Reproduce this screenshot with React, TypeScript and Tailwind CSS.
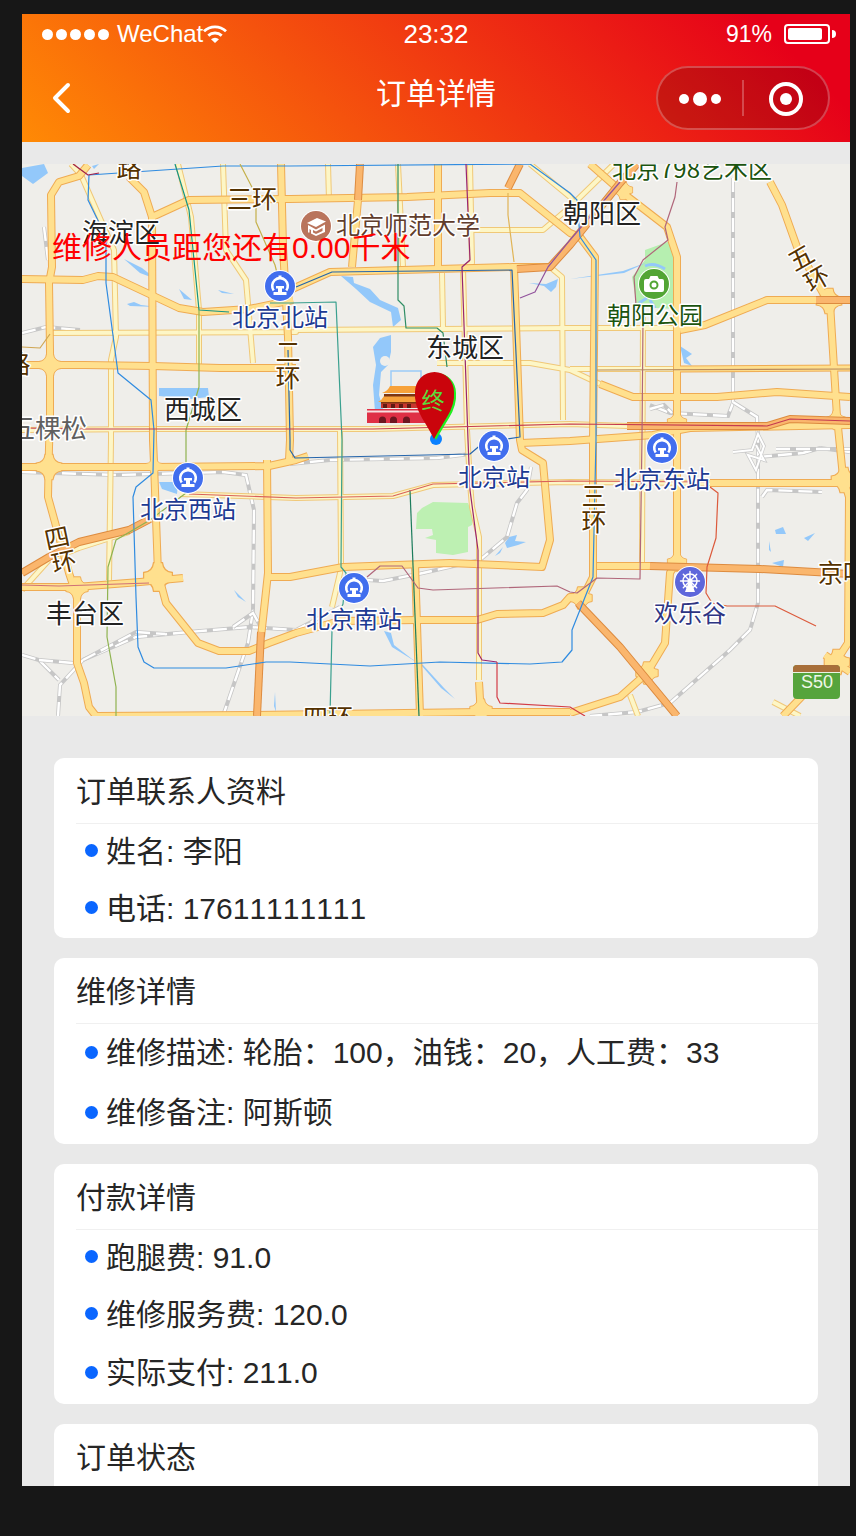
import type { ReactNode } from 'react'
import clsx from 'clsx'

type Row = { label: string; value: string; tall?: boolean }
type Section = { title: string; rows: Row[] }

const sections: Section[] = [
  {
    title: '订单联系人资料',
    rows: [
      { label: '姓名', value: '李阳' },
      { label: '电话', value: '17611111111' },
    ],
  },
  {
    title: '维修详情',
    rows: [
      { label: '维修描述', value: '轮胎：100，油钱：20，人工费：33', tall: true },
      { label: '维修备注', value: '阿斯顿', tall: true },
    ],
  },
  {
    title: '付款详情',
    rows: [
      { label: '跑腿费', value: '91.0' },
      { label: '维修服务费', value: '120.0' },
      { label: '实际支付', value: '211.0', tall: true },
    ],
  },
  {
    title: '订单状态',
    rows: [],
  },
]

// Road network, drawn back to front
const minorRoads = [
  '71,164 81,175 114,250 116,337 111,360 111,440 109,580',
  '223,164 226,250 246,280 253,363',
  '178,164 191,217 199,310 199,367',
  '49,333 296,332 296,330 570,328 680,328',
  '328,164 329,200',
  '398,164 403,267',
  '470,164 472,263 463,268 467,430 470,483 472,507 479,537 479,680',
  '470,230 543,230 570,207 614,164',
  '530,164 570,197 582,215',
  '550,267 562,277 563,420',
  '437,363 530,363 570,370 600,384',
  '643,317 642,563',
  '340,430 341,563 340,573 332,607',
  '180,494 296,498 393,496 433,485 570,482 710,483',
  '442,273 443,327',
  '22,430 153,429 373,429 570,424 627,426',
  '22,590 49,560 79,548 129,532',
  '570,369 680,369',
  '630,695 638,716',
  '773,702 800,716',
]

const majorRoads = [
  '88,165 79,176 59,182 51,195 52,267 49,283 50,350 50,417 49,447 48,497 69,573 77,597 77,663 84,683 89,707 96,716',
  '129,177 144,192 152,217 153,440 154,463 158,573 166,603 198,643 219,651 249,651 269,643 296,633 340,621 417,620 477,620 497,614 543,613 563,605 570,597 583,597 593,577 593,440 595,257 580,237 570,233 520,193 490,193 407,197 290,199 189,200 152,217',
  '22,279 83,280 98,276 113,277 179,308 203,312 249,309 293,300',
  '290,290 330,272 513,267 550,267',
  '22,365 85,365 153,366 220,368 296,368',
  '281,164 283,247 288,337 290,440 289,460',
  '438,164 438,270',
  '514,267 520,440 522,450 543,463 550,540 542,567 450,563 343,567 290,577 266,577',
  '267,460 268,573 261,637',
  '22,467 154,467 269,466 296,460 308,456',
  '22,587 76,587 140,582 183,578',
  '590,164 623,193 667,227 677,257 677,440 677,560 670,573 665,643 647,673 620,697 570,713',
  '770,182 782,205 797,247 823,293 830,303 837,417 843,477 849,497 848,643 837,660 783,716',
  '680,330 705,325 767,300 850,300',
  '600,384 633,397 717,397 777,392 850,397',
  '710,483 837,483',
  '597,566 650,566',
  '415,563 420,716',
  '479,682 481,716',
  '96,716 250,715 481,712 570,712',
  '520,443 570,441 653,435 690,428 850,425',
  '358,200 352,267',
  '825,655 850,672',
]

const sideRoads = [
  '680,369 850,368',
]

const highways = [
  '360,164 358,200',
  '520,164 508,188',
  '517,269 550,267 570,245 620,183 637,164',
  '22,573 49,557 79,542 129,530 150,519',
  '261,632 257,716',
  '627,426 767,426 790,419 850,421',
  '650,566 760,569 850,574',
  '578,603 620,647 677,716',
  '816,300 850,300',
]

const junctions = [
  [50, 365, 7], [49, 467, 8], [154, 466, 5], [158, 577, 9], [77, 588, 7],
  [677, 422, 6], [677, 562, 6], [647, 673, 7], [581, 598, 7],
  [829, 301, 8], [836, 420, 6], [844, 480, 8], [837, 662, 8],
  [623, 190, 6], [481, 710, 7],
]

const railways = [
  '733,178 733,403 728,416 670,413 650,405',
  '650,409 664,405 672,413',
  '733,402 757,417 758,440 758,603 750,630 730,650 670,703 637,712 590,716',
  '758,457 803,453 820,448 850,452',
  '776,449 850,449',
  '762,497 767,490 822,492',
  '22,472 116,475 223,472 246,475 254,510 253,610 248,643 223,716',
  '58,716 60,685 83,660 136,637 189,632 249,627 296,630 340,607',
  '22,655 39,660 59,680',
  '39,660 73,663',
  '83,660 136,632 165,634',
  '233,627 253,613 262,629',
  '290,464 330,460 437,458 470,454',
  '531,467 527,490 517,503 507,537 480,560 423,573 383,581 367,580',
  '44,227 48,260',
  '22,333 46,327 80,330',
]

const metroLines: [string, string][] = [
  ['#2f8be0', '89,175 223,166 290,166 530,164 570,193 577,200 580,237 596,260 596,440 593,577 572,630 572,650 562,662 530,664 440,662 370,666 290,662 266,662 226,668 154,668 144,662 138,647 136,597 133,497 136,487 153,473 154,430 151,400 118,373 106,283 106,237 88,200 89,175'],
  ['#2565ac', '288,350 290,440 290,450 295,458 470,454 483,443 520,437 512,270 332,272 296,287'],
  ['#149384', '175,164 189,210 199,310 229,312'],
  ['#3aa08f', '270,303 290,303 336,302 342,440 341,567 346,573 343,604 332,630 330,716'],
  ['#8fb350', '199,310 199,387 186,430 186,493 150,520 116,540 108,567 107,637 116,687 116,716'],
  ['#2f8d64', '398,164 398,300 404,306 406,328 437,328 443,333 447,367'],
  ['#1c7c5c', '410,490 419,716'],
  ['#99246f', '466,164 470,260 462,267 468,440 470,490 478,550 478,653 482,660 497,662'],
  ['#d23c46', '497,662 497,697 500,703 570,707 585,716'],
  ['#c43a50', '22,428 83,429 373,429 570,424 767,426 790,419 850,421'],
  ['#b0667a', '677,182 675,197 665,227 668,240 643,260 634,277 636,305 643,320 642,437 640,579 597,578 577,593 570,592 557,586 433,590 418,588 402,566 380,566 367,577'],
  ['#dc5a3c', '710,487 718,493 716,538 707,567 706,593 712,603 727,606 775,606 816,626'],
  ['#d9605a', '189,494 296,498 393,496 433,484 570,481 710,482'],
  ['#cf7077', '22,585 59,586 149,583'],
  ['#b98a5c', '597,370 850,369'],
  ['#91529c', '620,182 570,240 548,267 535,292 520,298'],
  ['#a02049', '73,164 88,175 99,173'],
  ['#c4b04a', '240,164 256,195 256,222 275,265 280,285'],
  ['#cfa653', '22,347 40,348 50,334'],
  ['#e0b456', '508,193 508,215 514,262'],
]

const water = [
  '22,168 44,164 48,173 33,184 22,176',
  '92,166 99,164 94,169',
  '159,388 208,388 209,397 190,399 159,396',
  '124,259 142,268 156,279 140,273',
  '127,304 134,302 141,305 158,307 130,306',
  '179,289 192,300 184,299',
  '218,290 234,294 222,293',
  '341,276 353,277 354,283 370,289 380,300 398,308 401,320 393,327 391,312 370,302 356,289',
  '373,347 380,338 391,335 391,352 388,365 381,372 379,395 384,412 375,412 373,385 376,365',
  '159,482 178,482 177,494 162,489',
  '384,631 391,633 394,645 412,659 423,665 444,688 455,699 441,688 421,665 392,647',
  '680,346 692,354 686,358 692,366 684,363',
  '529,283 546,284 558,279 556,287 551,292 544,286',
  '509,537 517,535 515,541 526,542 518,545 507,548 505,543',
  '495,556 503,547 500,553',
  '570,279 623,271 648,262 624,273',
  '775,530 783,527 786,534 776,534',
  '804,538 815,533 808,541',
  '772,563 784,560 783,567',
  '769,541 771,552 769,550',
  '234,590 246,602 238,597',
  '275,692 276,712 274,706',
]

type Label = {
  text: string
  x: number
  y: number
  tone: 'district' | 'road' | 'station' | 'park' | 'school' | 'fun' | 'faded'
  turn?: number
}

const labels: Label[] = [
  { text: '海淀区', x: 121, y: 242, tone: 'district' },
  { text: '朝阳区', x: 602, y: 223, tone: 'district' },
  { text: '东城区', x: 465, y: 357, tone: 'district' },
  { text: '西城区', x: 203, y: 419, tone: 'district' },
  { text: '丰台区', x: 85, y: 623, tone: 'district' },
  { text: '五棵松', x: 48, y: 438, tone: 'faded' },
  { text: '路', x: 129, y: 177, tone: 'road' },
  { text: '三环', x: 252, y: 208, tone: 'road' },
  { text: '路', x: 18, y: 373, tone: 'road' },
  { text: '二', x: 288, y: 361, tone: 'road' },
  { text: '环', x: 288, y: 387, tone: 'road' },
  { text: '三', x: 594, y: 505, tone: 'road' },
  { text: '环', x: 594, y: 531, tone: 'road' },
  { text: '五', x: 801, y: 267, tone: 'road', turn: -30 },
  { text: '环', x: 817, y: 288, tone: 'road', turn: -30 },
  { text: '四', x: 57, y: 547, tone: 'road', turn: -12 },
  { text: '环', x: 64, y: 571, tone: 'road', turn: -12 },
  { text: '四环', x: 328, y: 727, tone: 'road' },
  { text: '京哈', x: 843, y: 582, tone: 'road' },
  { text: '北京798艺术区', x: 692, y: 178, tone: 'park' },
  { text: '朝阳公园', x: 655, y: 324, tone: 'park' },
  { text: '北京师范大学', x: 408, y: 234, tone: 'school' },
  { text: '北京北站', x: 280, y: 326, tone: 'station' },
  { text: '北京站', x: 494, y: 486, tone: 'station' },
  { text: '北京东站', x: 662, y: 488, tone: 'station' },
  { text: '北京西站', x: 188, y: 518, tone: 'station' },
  { text: '北京南站', x: 354, y: 628, tone: 'station' },
  { text: '欢乐谷', x: 690, y: 622, tone: 'fun' },
]

const toneClass: Record<Label['tone'], string> = {
  district: 'fill-[#222222] text-[26px]',
  faded: 'fill-[#5f5f5f] text-[26px]',
  road: 'fill-[#553200] text-[25px]',
  station: 'fill-[#1d3b93] text-[24px]',
  park: 'fill-[#1b540f] text-[24px]',
  school: 'fill-[#603d2d] text-[24px]',
  fun: 'fill-[#2e3583] text-[24px]',
}

const stations = [
  [280, 286],
  [494, 446],
  [662, 448],
  [188, 478],
  [354, 588],
]

function Road({ points, width, color }: { points: string; width: number; color: string }) {
  return <polyline points={points} fill="none" stroke={color} strokeWidth={width} strokeLinejoin="round" />
}

function Poi({ x, y, color, children }: { x: number; y: number; color: string; children: ReactNode }) {
  return (
    <g transform={`translate(${x} ${y})`}>
      <circle r="16" fill="#fff" />
      <circle r="15" fill={color} />
      {children}
    </g>
  )
}

function CityMap() {
  return (
    <svg viewBox="22 164 828 552" className="block w-full font-['Noto_Sans_CJK_SC',sans-serif]" role="img" aria-label="地图">
      <rect x="22" y="164" width="828" height="552" fill="#efeeea" />

      <path d="M422 508 433 502 468 503 473 517 472 525 468 527 468 552 453 555 436 553 436 540 425 538 433 535 432 529 416 529 417 513Z" fill="#bdf0b2" />
      <path d="M645 250 670 241 675 250 675 309 637 307 632 277 645 260Z" fill="#b6efb0" />
      {water.map((p) => <polygon key={p} points={p} fill="#93c8fa" />)}
      <path d="M391 391V371H421V390" fill="none" stroke="#9ccbf8" strokeWidth="1.5" />
      <ellipse cx="385" cy="361" rx="5" ry="5" fill="#efeeea" />
      <path d="M645 266q9-4 20 3M650 300l5 8M639 303l8-5" fill="none" stroke="#93c8fa" strokeWidth="3" />

      {railways.map((p) => (
        <g key={p} fill="none">
          <polyline points={p} stroke="#c6c6c6" strokeWidth="4" />
          <polyline points={p} stroke="#ffffff" strokeWidth="2.4" strokeDasharray="14 6" />
        </g>
      ))}
      <path d="M733 452 752 450 758 434 764 446 756 470 748 455 764 460 756 445" fill="none" stroke="#c9c9c9" strokeWidth="3.5" />
      <path d="M733 452 752 450 758 434 764 446 756 470 748 455 764 460 756 445" fill="none" stroke="#fff" strokeWidth="2" />

      {minorRoads.map((p) => <Road key={p} points={p} width={6} color="#f0c878" />)}
      {minorRoads.map((p) => <Road key={p} points={p} width={4} color="#fdf6c6" />)}
      {sideRoads.map((p) => <Road key={p} points={p} width={7} color="#efab53" />)}
      {majorRoads.map((p) => <Road key={p} points={p} width={8} color="#efab53" />)}
      {junctions.map(([x, y, r]) => (
        <path key={`${x}-${y}`} transform={`translate(${x} ${y}) scale(${r})`} d="M-.5-1.6H.5Q.6-.6 1.6-.5V.5Q.6.6.5 1.6H-.5Q-.6.6-1.6.5V-.5Q-.6-.6-.5-1.6Z" fill="#ffe08e" stroke="#efab53" strokeWidth=".14" />
      ))}
      {sideRoads.map((p) => <Road key={p} points={p} width={5} color="#ffe08e" />)}
      {majorRoads.map((p) => <Road key={p} points={p} width={6} color="#ffe08e" />)}
      {highways.map((p) => <Road key={p} points={p} width={8} color="#dd8b3f" />)}
      {highways.map((p) => <Road key={p} points={p} width={6} color="#fab66d" />)}
      {metroLines.map(([color, p]) => (
        <polyline key={p} points={p} fill="none" stroke={color} strokeWidth="1.2" strokeLinejoin="round" />
      ))}

      {/* Tiananmen */}
      <g>
        <path d="M367 409H425V423H367Z" fill="#df2f45" />
        <path d="M367 411.5H425" stroke="#f8dfe0" strokeWidth="2" />
        <path d="M381 402H425V408H381Z" fill="#c8362f" />
        <path d="M390 386H425V393H382Q388 391 390 386ZM384 396H425V402H378Q382 400 384 396Z" fill="#f7a23a" />
        <path d="M384 394H425V396.500H384ZM381 402H425V403.500H381Z" fill="#7d3612" />
        <path d="M379 423v-3a3.500 3.500 0 0 1 7 0v3ZM390 423v-3a3.500 3.500 0 0 1 7 0v3ZM403 423v-3a3.500 3.500 0 0 1 7 0v3Z" fill="#6d1620" />
        <path d="M385 404v4M393 404v4M401 404v4M409 404v4" stroke="#5f1a12" strokeWidth="4" />
      </g>

      {/* Expressway shield */}
      <rect x="793" y="665" width="47" height="34" rx="4" fill="#56a43c" />
      <path d="M793 672v-3q0-4 4-4h39q4 0 4 4v3Z" fill="#a86f3a" />
      <path d="M793 672.500H840" stroke="#e9f4e2" />
      <text x="817" y="688" textAnchor="middle" className="fill-[#eef7e9] font-['Liberation_Sans',sans-serif] text-[18px]">S50</text>

      {labels.map((l) => (
        <text
          key={`${l.text}-${l.x}`}
          x={l.x}
          y={l.y}
          textAnchor="middle"
          transform={l.turn ? `rotate(${l.turn} ${l.x} ${l.y - 9})` : undefined}
          stroke="#fff"
          strokeWidth="3"
          strokeLinejoin="round"
          paintOrder="stroke"
          className={toneClass[l.tone]}
        >
          {l.text}
        </text>
      ))}

      {stations.map(([x, y]) => (
        <Poi key={`${x}-${y}`} x={x} y={y} color="#416eee">
          <path d="M-6.300 4.500A7.800 7.800 0 1 1 6.300 4.500" fill="none" stroke="#fff" strokeWidth="2.600" />
          <path d="M-1.500-10.500H1.500V-8H-1.500ZM-4 0H4V2.500H2V6H6.500V9H-6.500V6H-2V2.500H-4Z" fill="#fff" />
        </Poi>
      ))}
      <Poi x={316} y={226} color="#b9745c">
        <path d="M-9-3 1-8 10-4.500 0 1Z" fill="#fff" />
        <path d="M-8-1 0 3.500 9-1.500V6L0 10-5 7.500V4L-6.500 3V6.500H-8Z" fill="#fff" />
        <path d="M-3 4V6.500L0 8 6.500 5V2L0 5.500Z" fill="#b9745c" />
      </Poi>
      <Poi x={654} y={284} color="#52a534">
        <path d="M-8-5H-5L-3.500-8H3.500L5-5H8Q10-5 10-3V6Q10 8 8 8H-8Q-10 8-10 6V-3Q-10-5-8-5Z" fill="#fff" />
        <circle cy="1" r="3.500" fill="none" stroke="#52a534" strokeWidth="2" />
      </Poi>
      <Poi x={690} y={582} color="#5e67db">
        <g fill="none" stroke="#fff">
          <circle cy="-1" r="7" strokeWidth="1.500" />
          <path d="M-9.500-1H9.500M0-10.500V7M-6.700-7.700 6.700 5.700M6.700-7.700-6.700 5.700" strokeWidth="1.400" strokeLinecap="round" />
        </g>
        <circle cy="-1" r="2.500" fill="#fff" />
        <path d="M-1-1H1L5 10H-5Z" fill="#fff" />
      </Poi>

      {/* Destination pin */}
      <circle cx="436" cy="439" r="6" fill="#0a80ff" />
      <path d="M436 440Q432 432 424 419 416 405 417 393A19.500 20 0 0 1 456 393Q457 405 449 418 441 431 436 440Z" fill="#1ff01f" />
      <path d="M434 439Q430 431 422 418 414 404 415 392A19.500 20 0 0 1 454 392Q455 404 447 417 439 430 434 439Z" fill="#ca040c" />
      <text x="433" y="409" textAnchor="middle" className="fill-[#5cdc3c] text-[23px]">终</text>
    </svg>
  )
}

function StatusBar() {
  return (
    <div className="grid h-10 grid-cols-3 items-center px-5 leading-none">
      <div className="flex items-center gap-2">
        <div className="flex gap-[3px]">
          {[1, 2, 3, 4, 5].map((n) => <span key={n} className="size-[11px] rounded-full bg-white" />)}
        </div>
        <div className="flex items-center text-[24px]">
          <span className="[font-kerning:normal]">WeChat</span>
          <svg viewBox="0 0 24 18" className="h-[18px] w-6" fill="none" stroke="#fff" strokeWidth="2.800">
            <path d="M1 6.300A16 16 0 0 1 23 6.300" />
            <path d="M5.300 10.600A10 10 0 0 1 18.700 10.600" />
            <path d="M12 18 8 14.200A6 6 0 0 1 16 14.200Z" fill="#fff" stroke="none" />
          </svg>
        </div>
      </div>
      <span className="text-center text-[26px]">23:32</span>
      <div className="flex items-center justify-end gap-3">
        <span className="text-[23px]">91%</span>
        <svg viewBox="0 0 52 20" className="-mr-1.5 h-5 w-[52px]">
          <rect x="1" y="1" width="44" height="18" rx="3" fill="none" stroke="#fff" strokeWidth="2" />
          <rect x="4" y="4" width="34" height="12" rx="2" fill="#fff" />
          <path d="M48 6q4 0 4 4t-4 4Z" fill="#fff" />
        </svg>
      </div>
    </div>
  )
}

function NavBar() {
  return (
    <div className="grid h-[88px] grid-cols-[1fr_auto_1fr] items-center px-5">
      <button type="button" aria-label="返回" className="w-fit p-2.5">
        <svg viewBox="0 0 20 32" className="h-8 w-5" fill="none" stroke="#fff" strokeWidth="4" strokeLinecap="round" strokeLinejoin="round">
          <path d="M16 3 3 16 16 29" />
        </svg>
      </button>
      <h1 className="pb-2 text-[30px] leading-10">订单详情</h1>
      <div className="flex h-16 w-[174px] items-center justify-self-end rounded-full border-2 border-white/25 bg-black/15">
        <button type="button" aria-label="更多" className="flex flex-1 items-center justify-center gap-1 pt-0.5">
          <span className="size-2.5 rounded-full bg-white" />
          <span className="size-3.5 rounded-full bg-white" />
          <span className="size-2.5 rounded-full bg-white" />
        </button>
        <span className="h-9 w-0.5 bg-white/25" />
        <button type="button" aria-label="关闭" className="flex flex-1 items-center justify-center pt-0.5">
          <span className="flex size-[34px] items-center justify-center rounded-full border-4 border-white">
            <span className="size-3 rounded-full bg-white" />
          </span>
        </button>
      </div>
    </div>
  )
}

function SectionCard({ section }: { section: Section }) {
  return (
    <section className="rounded-[10px] bg-white pl-[22px]">
      <h2 className="flex h-[66px] items-center border-b border-[#f0f0f0] pt-0.5">{section.title}</h2>
      <ul className="min-h-[57px]">
        {section.rows.map((row) => (
          <li key={row.label} className={clsx('flex items-center pb-0.5', row.tall ? 'h-[60px]' : 'h-[57px]')}>
            <span className="flex w-[30px] shrink-0 justify-center pb-0.5">
              <span className="size-[13px] rounded-full bg-[#0a66ff]" />
            </span>
            <span>{row.label}: {row.value}</span>
          </li>
        ))}
      </ul>
    </section>
  )
}

export default function App() {
  return (
    <div className="flex h-screen bg-[#171717] pt-3.5 pr-1.5 pb-[50px] pl-[22px] font-['Liberation_Sans','Noto_Sans_CJK_SC',sans-serif] [font-kerning:none]">
      <div className="flex min-w-0 flex-1 flex-col overflow-hidden bg-[#e9e9e9]">
        <header className="shrink-0 bg-[linear-gradient(45deg,#ff8a05,#e60019_90%)] text-white">
          <StatusBar />
          <NavBar />
        </header>
        <main className="min-h-0 flex-1 overflow-hidden pt-[22px]">
          <div className="relative">
            <CityMap />
            <p className="absolute top-16 left-[30px] text-[30px] leading-10 text-[#ff0000]">维修人员距您还有0.00千米</p>
          </div>
          <div className="mt-[42px] flex flex-col gap-5 px-8 text-[30px] leading-10 text-[#262626]">
            {sections.map((s) => <SectionCard key={s.title} section={s} />)}
          </div>
        </main>
      </div>
    </div>
  )
}
